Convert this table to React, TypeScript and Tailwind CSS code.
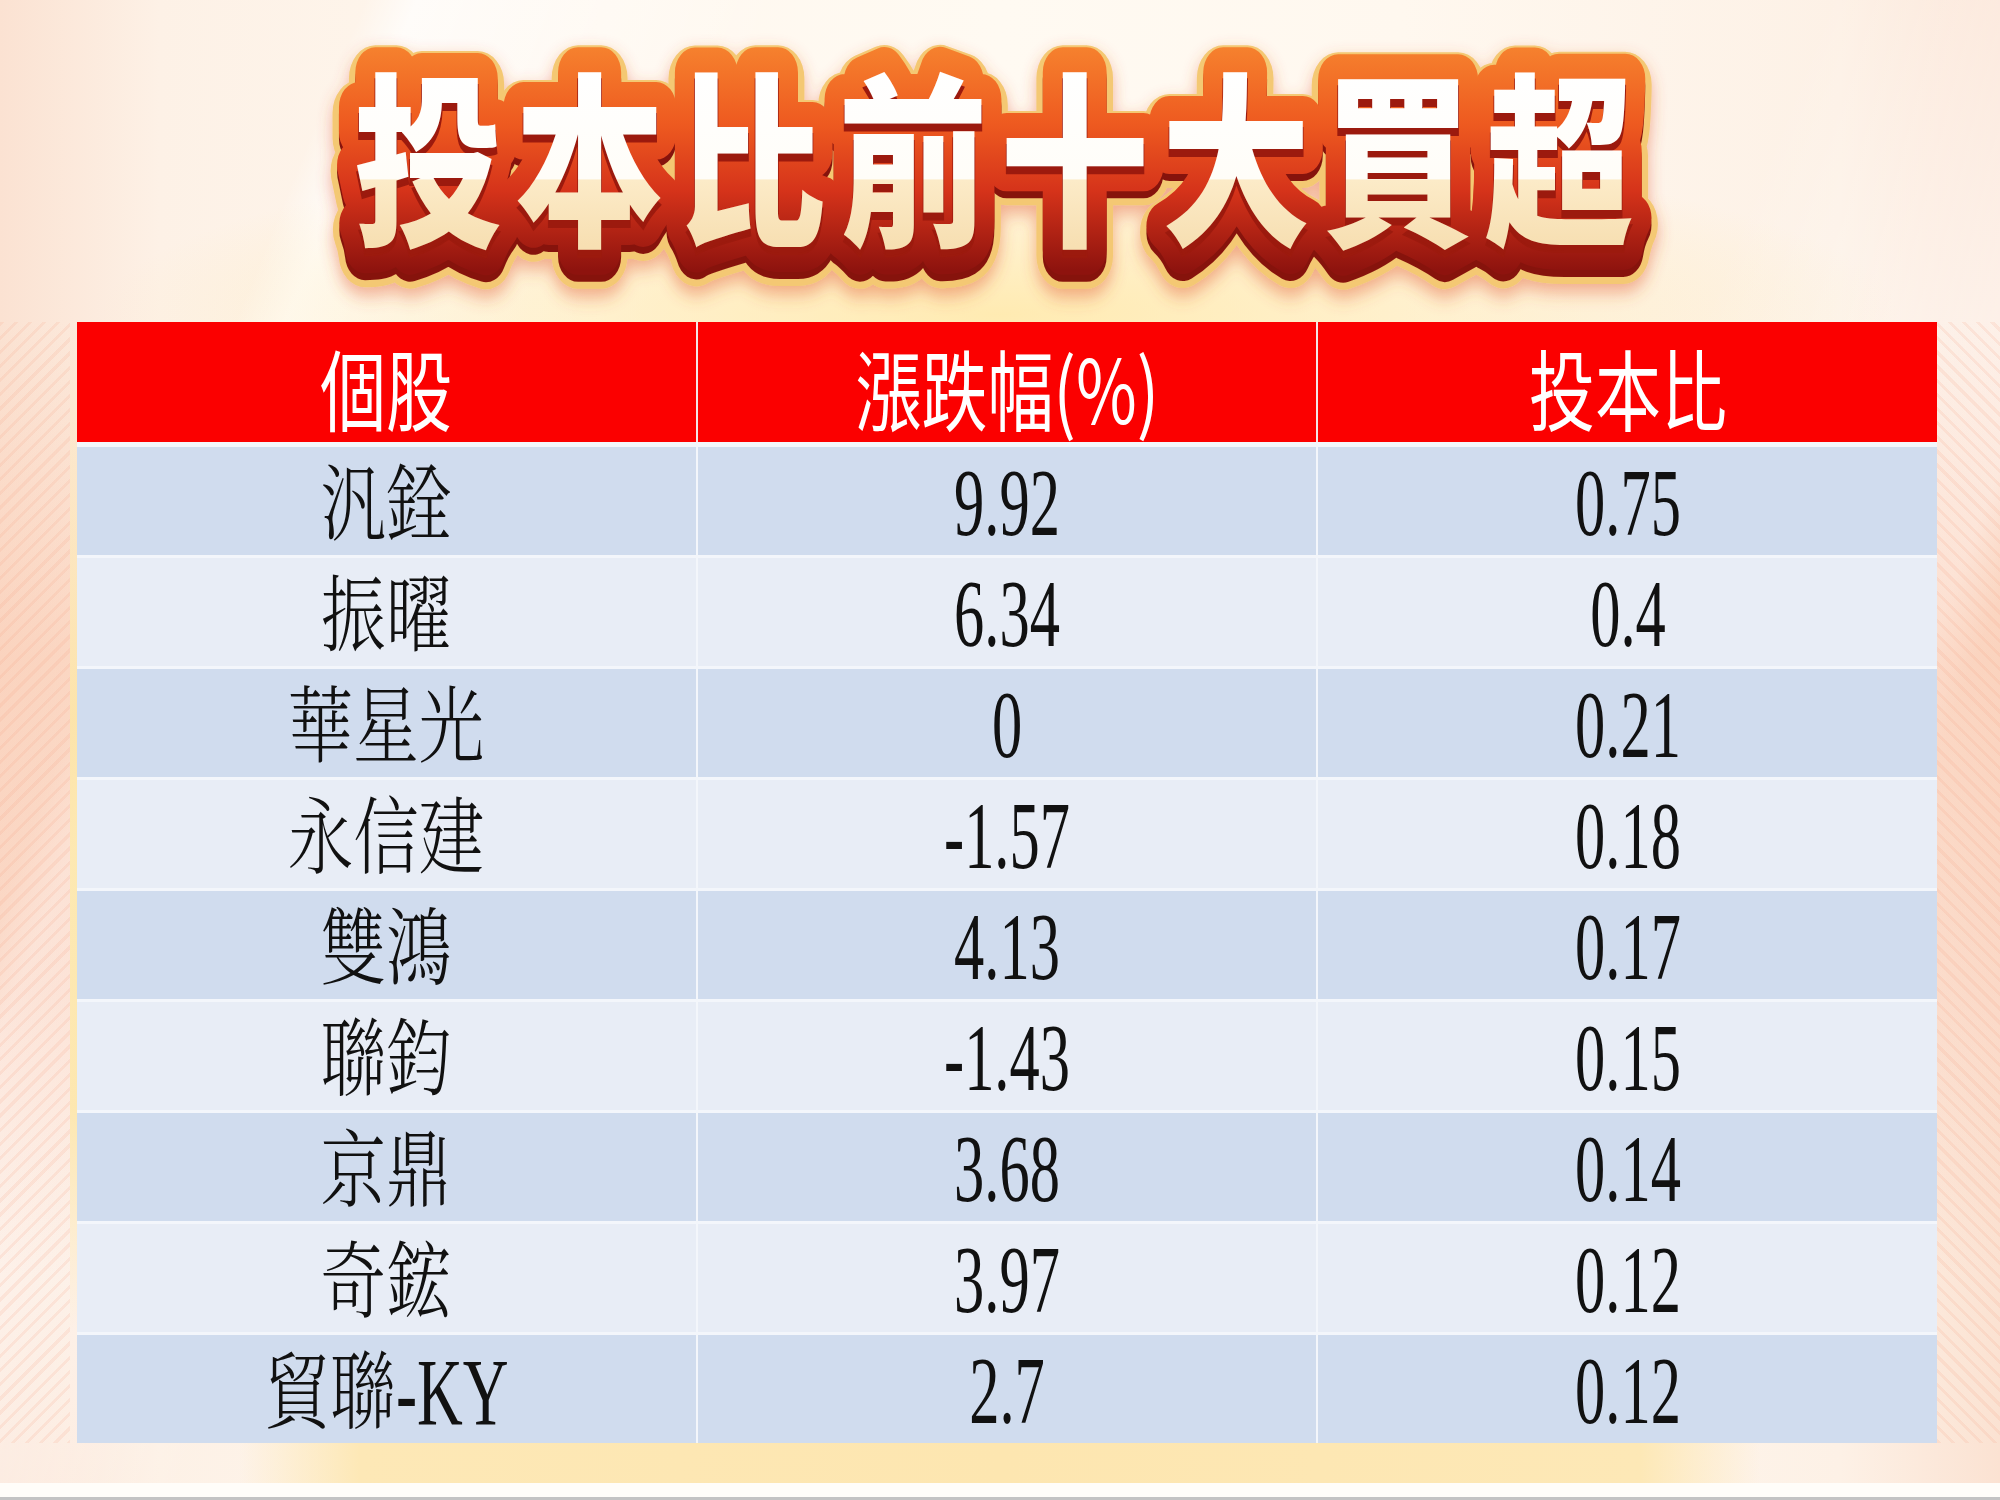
import React from 'react';

interface Row {
  name: string;
  suffix?: string;
  change: string;
  ratio: string;
}

const rows: Row[] = [
  { name: '汎銓', change: '9.92', ratio: '0.75' },
  { name: '振曜', change: '6.34', ratio: '0.4' },
  { name: '華星光', change: '0', ratio: '0.21' },
  { name: '永信建', change: '-1.57', ratio: '0.18' },
  { name: '雙鴻', change: '4.13', ratio: '0.17' },
  { name: '聯鈞', change: '-1.43', ratio: '0.15' },
  { name: '京鼎', change: '3.68', ratio: '0.14' },
  { name: '奇鋐', change: '3.97', ratio: '0.12' },
  { name: '貿聯', suffix: '-KY', change: '2.7', ratio: '0.12' },
];

// Heading art: one real <text>, the rim / band / depth layers are <use> copies of it
const Title: React.FC = () => (
  <svg width="1500" height="322" viewBox="0 0 1500 322" className="block">
    <defs>
      <linearGradient id="band" gradientUnits="userSpaceOnUse" x1="0" y1="45" x2="0" y2="270">
        <stop offset="0" stopColor="#f6822e" />
        <stop offset="0.35" stopColor="#ee5a20" />
        <stop offset="0.65" stopColor="#d5331a" />
        <stop offset="1" stopColor="#8e130e" />
      </linearGradient>
      <linearGradient id="face" gradientUnits="userSpaceOnUse" x1="0" y1="70" x2="0" y2="245">
        <stop offset="0" stopColor="#ffffff" />
        <stop offset="0.62" stopColor="#fffdf8" />
        <stop offset="0.63" stopColor="#fcebc8" />
        <stop offset="1" stopColor="#f7dfb2" />
      </linearGradient>
      <filter id="glow" x="-10%" y="-30%" width="120%" height="170%">
        <feDropShadow dx="0" dy="8" stdDeviation="9" floodColor="#e0522a" floodOpacity="0.45" />
      </filter>
    </defs>

    <g transform="translate(750 0) scale(0.8 1) translate(-750 0)">
      {/* gold rim with soft glow */}
      <use
        href="#title"
        fill="#f4c873"
        stroke="#f4c873"
        strokeWidth="66"
        strokeLinejoin="round"
        transform="translate(0 6)"
        filter="url(#glow)"
      />
      {/* dark depth of the band */}
      <use href="#title" fill="#86130c" stroke="#86130c" strokeWidth="50" strokeLinejoin="round" transform="translate(0 7)" />
      {/* orange → red band */}
      <use href="#title" fill="url(#band)" stroke="url(#band)" strokeWidth="50" strokeLinejoin="round" />
      {/* extrusion under white face */}
      <use href="#title" fill="#9c1a0e" stroke="#9c1a0e" strokeWidth="2" transform="translate(0 7)" />
      {/* white face */}
      <g fill="url(#face)">
        <text
          id="title"
          x="750"
          y="232"
          textAnchor="middle"
          fontSize="186"
          fontWeight="900"
          letterSpacing="16"
          fontFamily="'Noto Sans CJK TC', 'Noto Sans CJK SC', sans-serif"
        >
          投本比前十大買超
        </text>
      </g>
    </g>
  </svg>
);

const cjkFont = "[font-family:'Liberation_Serif','Noto_Serif_CJK_TC','Noto_Sans_CJK_TC',serif]";
const numFont = "[font-family:'Liberation_Serif','Times_New_Roman',serif]";

const LeftGutter: React.FC = () => (
  <div className="w-[77px] shrink-0 flex">
    <div className="w-[70px] bg-[repeating-linear-gradient(135deg,rgba(246,160,130,0.16)_0_3px,rgba(246,160,130,0)_3px_10px),linear-gradient(to_bottom,rgba(255,255,255,0)_0%,rgba(250,196,170,0.5)_30%,rgba(250,205,185,0.45)_60%,rgba(255,255,255,0)_85%)]" />
    <div className="w-[7px] bg-[linear-gradient(to_bottom,rgba(253,230,160,0)_0%,rgba(253,226,150,0.7)_35%,rgba(253,226,150,0.7)_70%,rgba(253,230,160,0)_90%)]" />
  </div>
);

const RightGutter: React.FC = () => (
  <div className="w-[63px] shrink-0 bg-[repeating-linear-gradient(45deg,rgba(246,160,130,0.16)_0_3px,rgba(246,160,130,0)_3px_10px),linear-gradient(to_bottom,rgba(255,255,255,0)_0%,rgba(250,196,170,0.5)_30%,rgba(250,205,185,0.45)_60%,rgba(255,255,255,0)_85%)]" />
);

const NumCell: React.FC<{ value: string; dark: boolean }> = ({ value, dark }) => (
  <div className={`flex items-center justify-center h-[108px] ${dark ? 'bg-[#d0dcee]' : 'bg-[#e8edf6]'}`}>
    <span className={`inline-block scale-x-[0.63] text-[96px] leading-none text-[#111] translate-y-[2px] ${numFont}`}>
      {value}
    </span>
  </div>
);

export default function App() {
  return (
    <div className="w-[2000px] h-[1500px] flex flex-col overflow-hidden bg-[radial-gradient(ellipse_45%_12%_at_50%_21%,rgba(255,228,150,0.7),rgba(255,240,200,0)_100%),linear-gradient(112deg,rgba(255,255,255,0)_0%,rgba(255,255,255,0)_14%,rgba(255,255,255,0.7)_16%,rgba(255,255,255,0)_30%,rgba(255,255,255,0)_70%,rgba(255,255,255,0.6)_84%,rgba(255,255,255,0)_86%),linear-gradient(to_right,#fbe2d2_0%,#fdf1e6_8%,#fff8ef_30%,#fffaf2_50%,#fff8ef_70%,#fdf1e6_92%,#fbe2d2_100%)]">
      {/* heading */}
      <div className="h-[322px] flex justify-center shrink-0">
        <Title />
      </div>

      {/* table band */}
      <div className="flex shrink-0">
        <LeftGutter />
        <div className="w-[1860px] shrink-0 bg-[#f3f6fb] flex flex-col">
          <div className="grid grid-cols-3 gap-x-[2px] h-[120px] bg-[#f3e6e6]">
            {['個股', '漲跌幅(%)', '投本比'].map((h) => (
              <div key={h} className="bg-[#fb0000] flex items-center justify-center">
                <span className="inline-block scale-x-[0.75] text-[88px] leading-none text-white translate-y-[4px] [font-family:'Noto_Sans_CJK_TC','Liberation_Sans',sans-serif]">
                  {h}
                </span>
              </div>
            ))}
          </div>
          <div className="grid grid-cols-3 gap-x-[2px] gap-y-[3px] mt-[5px]">
            {rows.map((r, i) => {
              const dark = i % 2 === 0;
              return (
                <React.Fragment key={r.name}>
                  <div className={`flex items-center justify-center h-[108px] ${dark ? 'bg-[#d0dcee]' : 'bg-[#e8edf6]'}`}>
                    <span
                      className={`inline-block scale-x-[0.78] text-[84px] leading-none text-[#111] font-light translate-y-[5px] ${
                        r.suffix ? '-mx-[18px]' : ''
                      } ${cjkFont}`}
                    >
                      {r.name}
                    </span>
                    {r.suffix && (
                      <span className={`inline-block scale-x-[0.66] -mx-[29px] text-[96px] leading-none text-[#111] translate-y-[4px] ${numFont}`}>
                        {r.suffix}
                      </span>
                    )}
                  </div>
                  <NumCell value={r.change} dark={dark} />
                  <NumCell value={r.ratio} dark={dark} />
                </React.Fragment>
              );
            })}
          </div>
        </div>
        <RightGutter />
      </div>

      {/* bottom glow and rule */}
      <div className="flex-1 flex flex-col">
        <div className="h-[40px] bg-[linear-gradient(to_right,rgba(255,255,255,0)_12%,#fde8b6_18%,#fde6b0_50%,#fde8b6_82%,rgba(255,255,255,0)_88%)]" />
        <div className="flex-1 bg-[#fffdf9]" />
        <div className="h-[3px] bg-[#c3c3c3]" />
      </div>
    </div>
  );
}
